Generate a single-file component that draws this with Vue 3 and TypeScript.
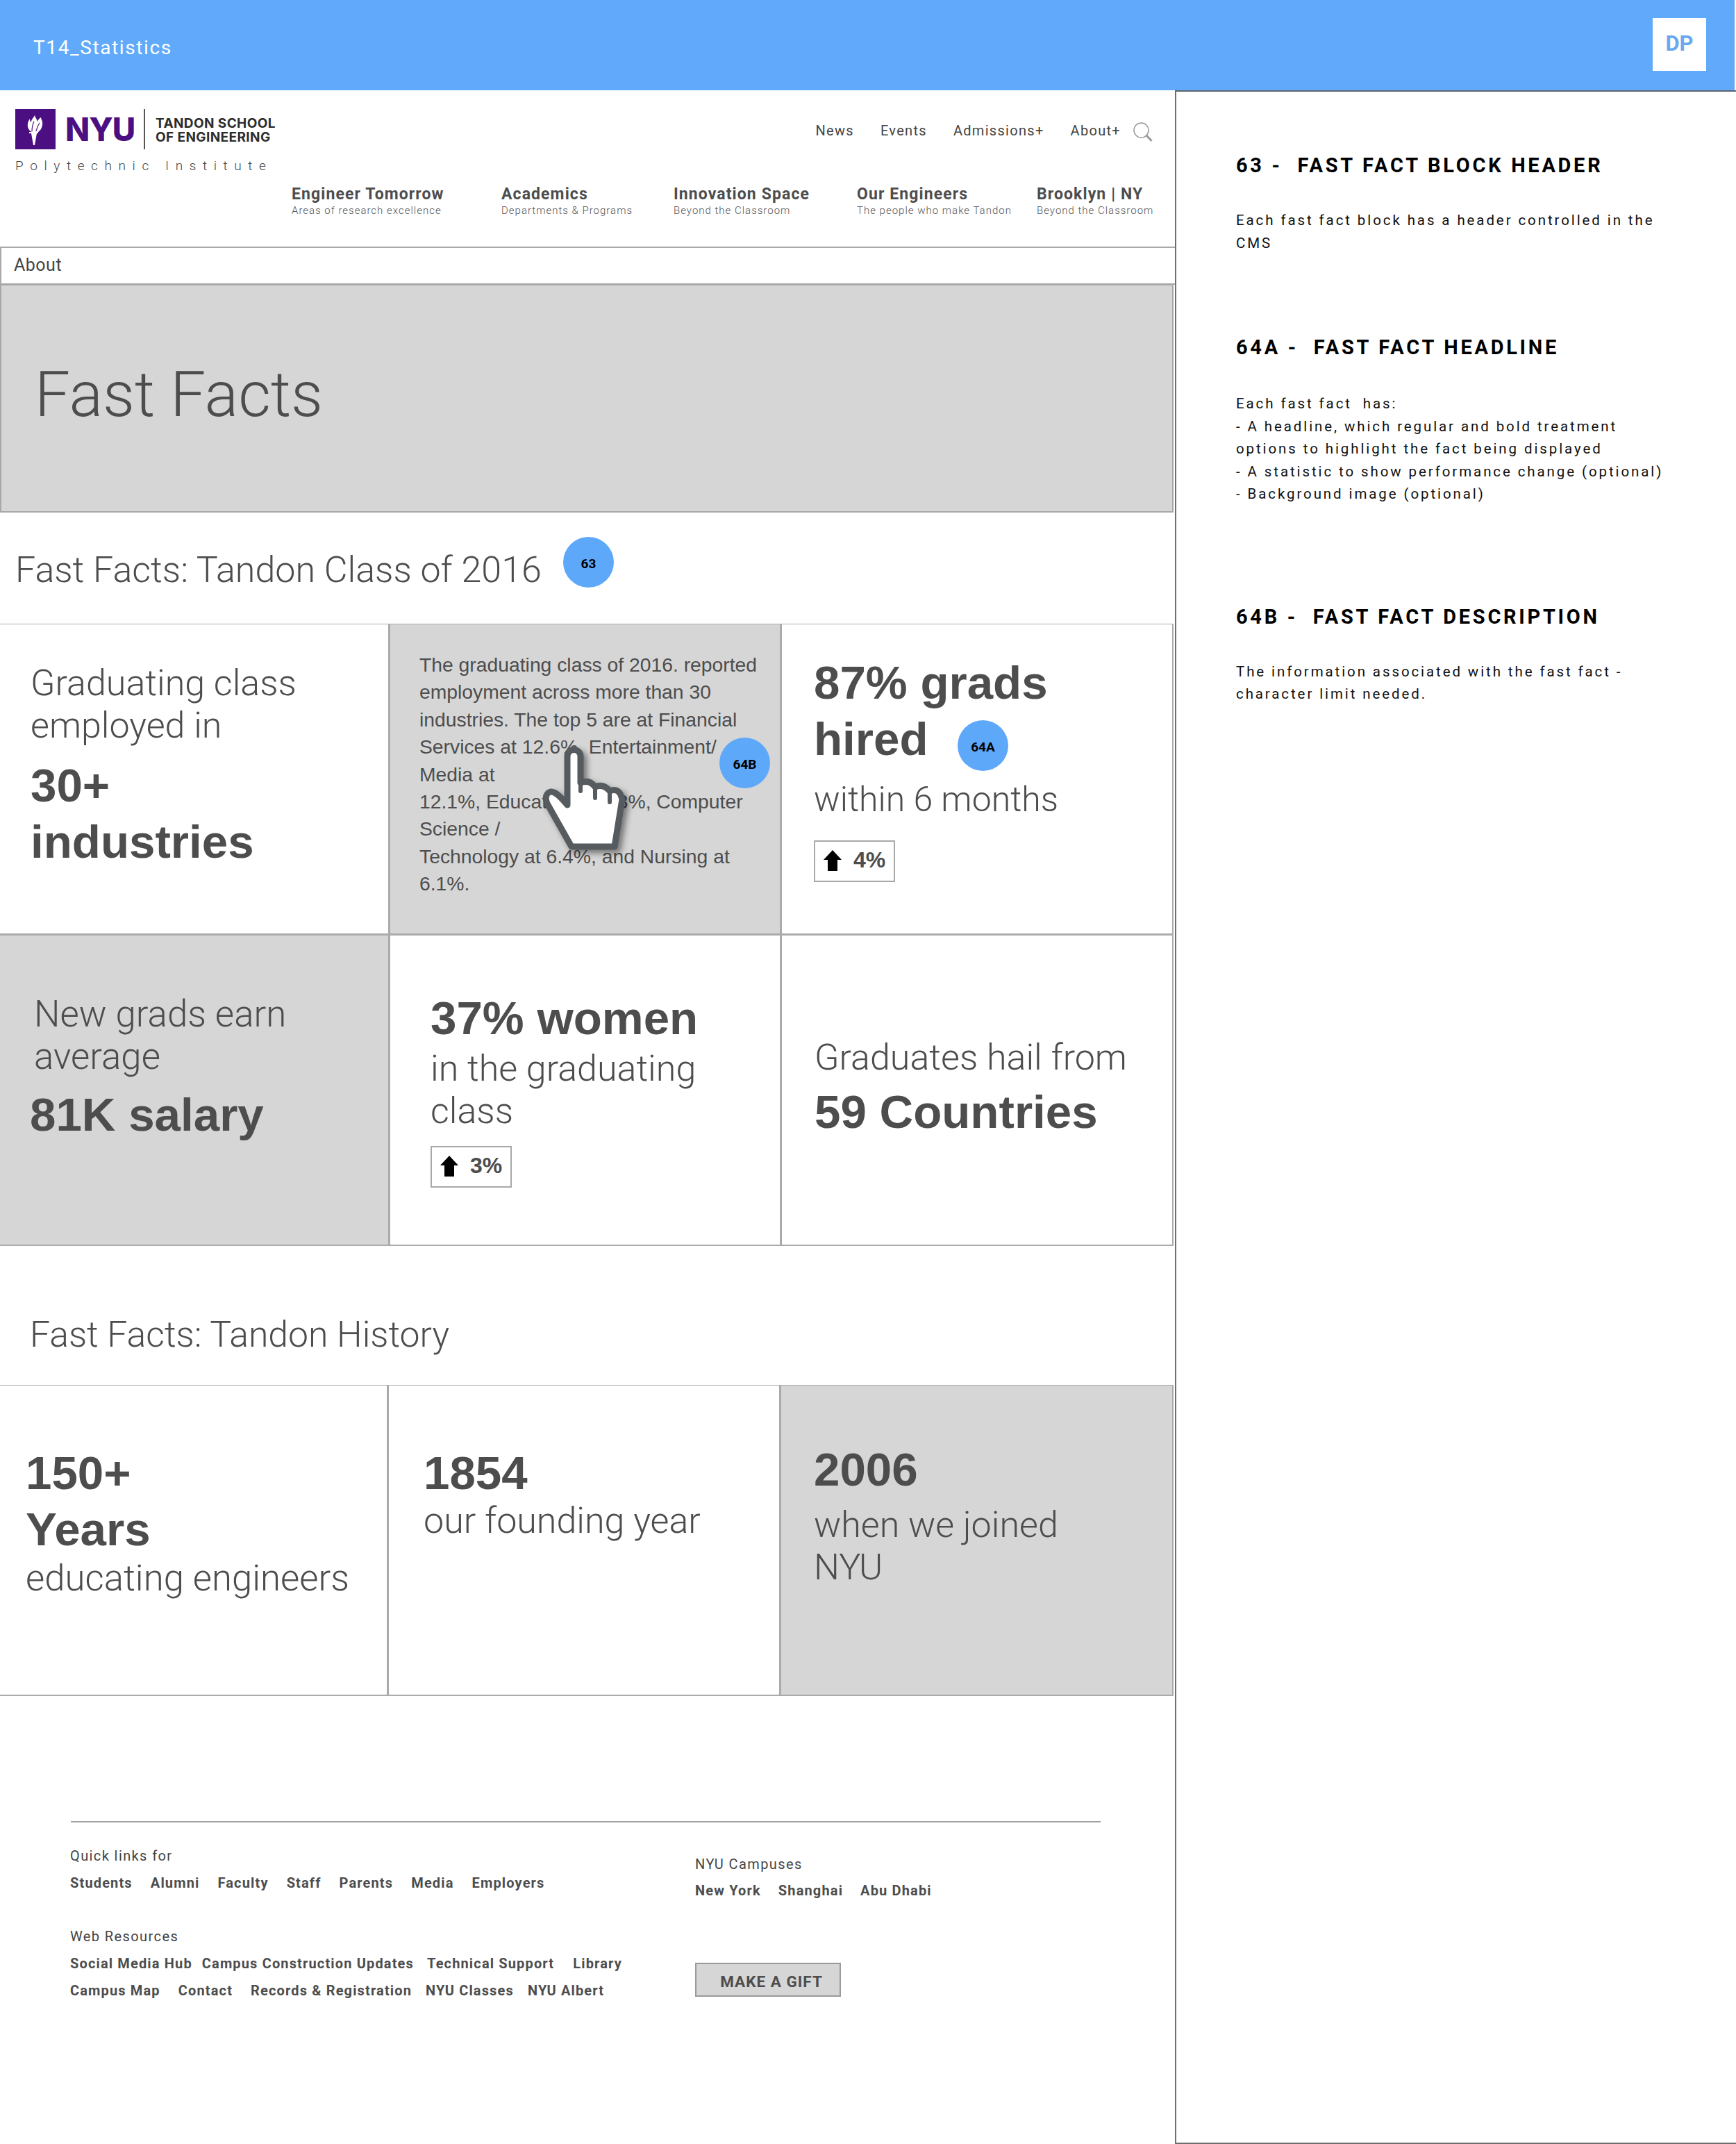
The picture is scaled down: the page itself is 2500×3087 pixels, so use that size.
<script setup lang="ts">
const utilLinks: string[] = ['News', 'Events', 'Admissions+', 'About+']
const mainNav = [
  { t: 'Engineer Tomorrow', s: 'Areas of research excellence' },
  { t: 'Academics', s: 'Departments & Programs' },
  { t: 'Innovation Space', s: 'Beyond the Classroom' },
  { t: 'Our Engineers', s: 'The people who make Tandon' },
  { t: 'Brooklyn | NY', s: 'Beyond the Classroom' }
]
const quick: string[] = ['Students', 'Alumni', 'Faculty', 'Staff', 'Parents', 'Media', 'Employers']
const web1: string[] = ['Social Media Hub', 'Campus Construction Updates', 'Technical Support', 'Library']
const web2: string[] = ['Campus Map', 'Contact', 'Records & Registration', 'NYU Classes', 'NYU Albert']
const campuses: string[] = ['New York', 'Shanghai', 'Abu Dhabi']
</script>

<template>
  <div class="page">
    <header class="topbar">
      <span class="title">T14_Statistics</span>
      <span class="dp">DP</span>
    </header>
    <div class="body">
      <main class="main">
        <div class="head">
          <div class="brand-row">
            <div class="brand">
              <div class="logo">
                <svg class="torch" width="58" height="58" viewBox="0 0 58 58">
                  <rect width="58" height="58" fill="#4b0f82" />
                  <path d="M28 9c1 4 3 5 4 9 1-3 3-5 5-6 0 3 3 5 2 11-1 5-3 8-6 10h-9c-4-2-7-6-6-12 0-3 2-5 3-7 0 3 1 4 2 5 0-4 3-6 5-10z" fill="#fff" />
                  <path d="M20 33h13v2h-2l-3 17h-2l-3-17h-3z" fill="#fff" />
                  <path d="M24 32c0-6 1-10 3-14M30 32c1-5 2-8 5-12" stroke="#4b0f82" stroke-width="1.2" fill="none" />
                </svg>
                <span class="nyu">NYU</span>
                <span class="rule"></span>
                <span class="school">TANDON SCHOOL<br />OF ENGINEERING</span>
              </div>
              <div class="poly">Polytechnic Institute</div>
            </div>
            <nav class="util">
              <a v-for="l in utilLinks" :key="l">{{ l }}</a>
              <svg class="search" width="28" height="28" viewBox="0 0 28 28" fill="none" stroke="#9a9a9a">
                <circle cx="11.5" cy="11.5" r="10.5" stroke-width="1.5" />
                <path d="M19 19l7.5 8" stroke-width="3" />
              </svg>
            </nav>
          </div>
          <nav class="mainnav">
            <div v-for="n in mainNav" :key="n.t" class="navitem">
              <div class="nt">{{ n.t }}</div>
              <div class="ns">{{ n.s }}</div>
            </div>
          </nav>
        </div>

        <div class="crumb">About</div>
        <div class="hero"><h1>Fast Facts</h1></div>

        <h2 class="sec first">Fast Facts: Tandon Class of 2016 <span class="badge b63">63</span></h2>

        <section class="grid">
          <div class="card c1">
            <div class="lt">Graduating class<br />employed in</div>
            <div class="bd mt1">30+<br />industries</div>
          </div>
          <div class="card gray c2">
            <p class="desc">The graduating class of 2016. reported<br />employment across more than 30<br />industries. The top 5 are at Financial<br />Services at 12.6%, Entertainment/<br />Media at<br />12.1%, Education at 8.3%, Computer<br />Science /<br />Technology at 6.4%, and Nursing at<br />6.1%.</p>
            <span class="badge b64b">64B</span>
            <svg class="hand" width="124" height="154" viewBox="0 0 124 154">
              <path d="M36 84V14a9.500 9.500 0 0 1 19 0V52q13-5 21 6q12-5 21 6q14-6 18 12L104 144H42L7 82C2 70 9 62 17 66C24 69 30 77 36 84Z" fill="#fff" stroke="#555b5e" stroke-width="9" stroke-linejoin="round" />
              <path d="M55 52V64M76 58V74M97 64V80" stroke="#555b5e" stroke-width="6" stroke-linecap="round" />
            </svg>
          </div>
          <div class="card c3">
            <div class="bd">87% grads<br />hired</div>
            <span class="badge b64a">64A</span>
            <div class="lt mt2">within 6 months</div>
            <div class="delta d1">
              <svg width="26" height="30" viewBox="0 0 26 30"><path d="M13 0L26 14H20V30H6V14H0Z" fill="#000" /></svg>
              <span>4%</span>
            </div>
          </div>
          <div class="card gray c4">
            <div class="lt in">New grads earn<br />average</div>
            <div class="bd mt3">81K salary</div>
          </div>
          <div class="card c5">
            <div class="bd">37% women</div>
            <div class="lt g">in the graduating<br />class</div>
            <div class="delta d2">
              <svg width="26" height="30" viewBox="0 0 26 30"><path d="M13 0L26 14H20V30H6V14H0Z" fill="#000" /></svg>
              <span>3%</span>
            </div>
          </div>
          <div class="card c6">
            <div class="lt">Graduates hail from</div>
            <div class="bd mt4">59 Countries</div>
          </div>
        </section>

        <h2 class="sec second">Fast Facts: Tandon History</h2>

        <section class="grid hist">
          <div class="card h1c">
            <div class="bd">150+<br />Years</div>
            <div class="lt">educating engineers</div>
          </div>
          <div class="card h2c">
            <div class="bd">1854</div>
            <div class="lt">our founding year</div>
          </div>
          <div class="card gray h3c">
            <div class="bd">2006</div>
            <div class="lt mt5">when we joined<br />NYU</div>
          </div>
        </section>

        <footer class="foot">
          <div class="fcol left">
            <div class="fl">Quick links for</div>
            <div class="links q"><a v-for="l in quick" :key="l">{{ l }}</a></div>
            <div class="fl web">Web Resources</div>
            <div class="links w1"><a v-for="l in web1" :key="l">{{ l }}</a></div>
            <div class="links w2"><a v-for="l in web2" :key="l">{{ l }}</a></div>
          </div>
          <div class="fcol right">
            <div class="fl">NYU Campuses</div>
            <div class="links c"><a v-for="l in campuses" :key="l">{{ l }}</a></div>
            <button class="gift">MAKE A GIFT</button>
          </div>
        </footer>
      </main>

      <aside class="panel">
        <section class="note n1">
          <h3>63 -&nbsp; FAST FACT BLOCK HEADER</h3>
          <p>Each fast fact block has a header controlled in the<br />CMS</p>
        </section>
        <section class="note n2">
          <h3>64A -&nbsp;&nbsp;FAST FACT HEADLINE</h3>
          <p>Each fast fact&nbsp; has:<br />- A headline, which regular and bold treatment<br />options to highlight the fact being displayed<br />- A statistic to show performance change (optional)<br />- Background image (optional)</p>
        </section>
        <section class="note n3">
          <h3>64B -&nbsp;&nbsp;FAST FACT DESCRIPTION</h3>
          <p>The information associated with the fast fact -<br />character limit needed.</p>
        </section>
      </aside>
    </div>
  </div>
</template>

<style>
html, body { margin: 0; background: #fff; }
</style>

<style scoped>
* { box-sizing: border-box; }
.page { width: 2500px; height: 3087px; display: flex; flex-direction: column; font-family: Roboto, "Liberation Sans", sans-serif; color: #4d4d4d; overflow: hidden; }
.topbar { height: 130px; width: 2498px; flex: none; background: #61aafb; display: flex; align-items: center; justify-content: space-between; padding: 0 41px 0 48px; }
.title { color: #fff; font-size: 28px; letter-spacing: 1.6px; position: relative; top: 3px; }
.dp { width: 77px; height: 76px; background: #fff; color: #6aa9ef; font-weight: 700; font-size: 31px; display: flex; align-items: center; justify-content: center; position: relative; top: -1px; padding-bottom: 4px; }
.body { flex: 1; display: flex; min-height: 0; }
.main { width: 1692px; flex: none; }
.panel { flex: 1; border-left: 2px solid #6f6f6f; border-top: 2px solid #5c6670; border-bottom: 2px solid #6f6f6f; padding: 88px 40px 0 86px; color: #111; }

.head { height: 225px; }
.brand-row { display: flex; justify-content: space-between; padding: 27px 32px 0 22px; }
.logo { display: flex; align-items: center; height: 58px; }
.torch { display: block; flex: none; }
.nyu { font-family: Inter, sans-serif; font-weight: 800; font-size: 46px; color: #4b0f82; margin-left: 14px; letter-spacing: -1px; width: 100px; }
.rule { width: 2px; height: 58px; background: #555; margin-left: 13px; }
.school { font-family: Inter, sans-serif; font-weight: 700; font-size: 19px; letter-spacing: 0.4px; line-height: 20px; color: #2d2d2d; margin-left: 15px; padding-top: 4px; }
.poly { font-size: 19px; font-weight: 300; letter-spacing: 9.600px; margin-top: 12px; color: #444; white-space: nowrap; }
.util { display: flex; align-items: center; height: 40px; margin-top: 11px; font-size: 20px; letter-spacing: 1.300px; color: #444; }
.util a { margin-left: 38px; }
.search { margin-left: 18px; margin-top: 4px; }
.mainnav { display: grid; grid-template-columns: 302px 248px 264px 259px auto; margin: 17px 0 0 420px; }
.nt { font-weight: 700; font-size: 23px; letter-spacing: 1.100px; line-height: 25px; color: #4d4d4d; white-space: nowrap; }
.ns { font-size: 15px; font-weight: 300; letter-spacing: 1px; line-height: 19px; margin-top: 2px; white-space: nowrap; color: #555; }

.crumb { height: 55px; border: 2px solid #a8a8a8; border-right: 0; padding-left: 18px; font-size: 25px; letter-spacing: 0.5px; line-height: 49px; color: #444; }
.hero { height: 328px; width: 1690px; background: #d6d6d6; border: 2px solid #a8a8a8; border-top-width: 1px; }
.hero h1 { margin: 0; padding: 102px 0 0 48px; font-size: 90.600px; font-weight: 300; line-height: 110px; color: #4d4d4d; }

.sec { margin: 0; font-weight: 300; font-size: 52px; color: #4d4d4d; white-space: nowrap; position: relative; }
.sec.first { height: 160px; padding: 52px 0 0 22px; line-height: 62px; }
.sec.second { height: 200px; padding: 97px 0 0 43px; line-height: 62px; font-size: 51.700px; }

.grid { display: grid; grid-template-columns: 561px 564px 565px; grid-auto-rows: 448px; width: 1690px; }
.grid.hist { grid-template-columns: 559px 565px 566px; grid-auto-rows: 448px; }
.card { border: 2px solid #ababab; border-left-width: 1px; border-top-width: 1px; position: relative; padding: 54px 20px 0 44px; }
.card.gray { background: #d6d6d6; }
.c1, .c4, .h1c { border-left: 0; }
.lt { font-weight: 300; font-size: 52px; line-height: 61px; color: #4d4d4d; white-space: nowrap; }
.bd { font-family: "Liberation Sans", Arial, sans-serif; font-weight: 700; font-size: 67.300px; line-height: 81px; color: #4d4d4d; white-space: nowrap; }
.mt1 { margin-top: 15px; }
.mt2 { margin-top: 17px; font-size: 50px; }
.mt3 { margin: 12px 0 0 -6px; }
.mt4 { margin-top: 7px; }
.mt5 { margin-top: 9px; }
.g { margin-top: 2px; }
.desc { margin: 0; font-family: "Liberation Sans", Arial, sans-serif; font-size: 28.300px; line-height: 39.400px; color: #4d4d4d; white-space: nowrap; }
.c1 { padding-left: 44px; }
.c2 { padding: 39px 0 0 42px; }
.c3 { padding: 43px 0 0 46px; }
.c4 { padding: 83px 0 0 49px; }
.c4 .lt { font-size: 52.800px; }
.c5 { padding: 78px 0 0 58px; }
.c6 { padding: 145px 0 0 47px; }
.h1c { padding: 85px 0 0 37px; }
.h2c { padding: 85px 0 0 50px; }
.h3c { padding: 80px 0 0 47px; }
.h1c .lt { margin-top: 0; font-size: 52.700px; }
.h2c .lt { margin-top: -2px; }

.badge { position: absolute; border-radius: 50%; width: 73px; height: 73px; background: #5ea8fa; color: #000; font: 700 19px/77px Roboto, sans-serif; text-align: center; }
.b63 { left: 811px; top: 35px; }
.b64b { left: 474px; top: 163px; }
.b64a { left: 253px; top: 138px; }
.hand { position: absolute; left: 219px; top: 176px; filter: drop-shadow(5px 5px 4px rgba(0,0,0,.45)); }
.delta { display: flex; align-items: flex-start; gap: 17px; width: 117px; height: 60px; border: 2px solid #a8a8a8; background: #fff; padding: 12px 0 0 12px; margin-top: 29px; font-family: "Liberation Sans", sans-serif; font-weight: 700; font-size: 32px; line-height: 28px; color: #4d4d4d; }
.d1 { margin-top: 28px; }
.d2 { margin-top: 20px; }

.foot { margin: 180px 0 0 102px; width: 1483px; border-top: 2px solid #a0a0a0; display: flex; padding-top: 36px; }
.fcol { display: flex; flex-direction: column; }
.left { width: 899px; margin-left: -1px; }
.right { margin-left: 1px; }
.fl { font-size: 20px; letter-spacing: 1.400px; line-height: 24px; color: #444; }
.links { display: flex; font-size: 20px; font-weight: 700; letter-spacing: 1.150px; line-height: 24px; color: #4d4d4d; white-space: nowrap; margin-top: 15px; }
.q a { margin-right: 26px; }
.w1 a:nth-child(1) { margin-right: 14px; }
.w1 a:nth-child(2) { margin-right: 19px; }
.w1 a:nth-child(3) { margin-right: 27px; }
.w2 a:nth-child(-n+2) { margin-right: 26px; }
.w2 a:nth-child(n+3) { margin-right: 20px; }
.web { margin-top: 53px; }
.links.c { margin-top: 14px; }
.c a { margin-right: 25px; }
.right { padding-top: 12px; }
.gift { margin-top: 92px; width: 210px; height: 49px; background: #d6d6d6; border: 2px solid #9a9a9a; font: 700 22.500px Roboto, sans-serif; letter-spacing: 1px; color: #4d4d4d; padding: 5px 0 0 10px; }

.note h3 { margin: 0; font-size: 29px; font-weight: 700; letter-spacing: 3.700px; line-height: 36px; color: #000; white-space: pre; }
.note p { margin: 45px 0 0; font-size: 20.500px; letter-spacing: 2.900px; line-height: 32.500px; color: #111; white-space: nowrap; }
.n2 { margin-top: 116px; }
.n2 p { margin-top: 47px; }
.n3 { margin-top: 142px; }
</style>
